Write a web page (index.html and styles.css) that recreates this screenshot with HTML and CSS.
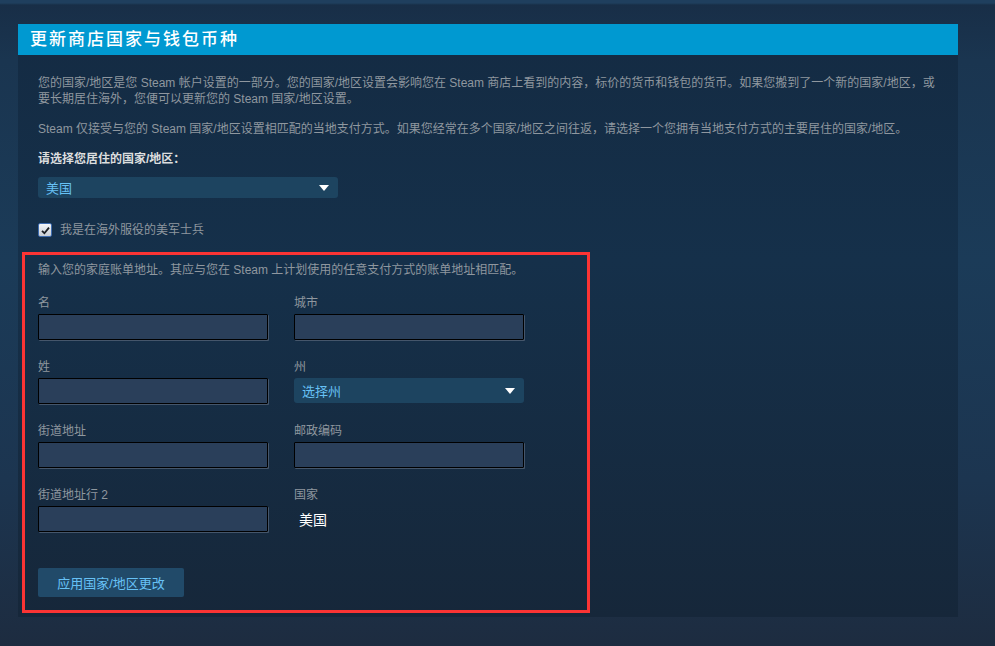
FILE: index.html
```html
<!DOCTYPE html>
<html>
<head>
  <meta charset="utf-8">
  <title>更新商店国家与钱包币种</title>
  <link rel="stylesheet" href="styles.css">
</head>
<body>
  <div class="page">
    <div class="panel">
      <div class="panel-title">更新商店国家与钱包币种</div>
      <div class="panel-body">
        <p class="note">您的国家/地区是您 Steam 帐户设置的一部分。您的国家/地区设置会影响您在 Steam 商店上看到的内容，标价的货币和钱包的货币。如果您搬到了一个新的国家/地区，或要长期居住海外，您便可以更新您的 Steam 国家/地区设置。</p>
        <p class="note">Steam 仅接受与您的 Steam 国家/地区设置相匹配的当地支付方式。如果您经常在多个国家/地区之间往返，请选择一个您拥有当地支付方式的主要居住的国家/地区。</p>
        <div class="country-label">请选择您居住的国家/地区：</div>
        <div class="dropdown country-select">
          <span>美国</span>
          <span class="arrow"></span>
        </div>
        <div class="check-row">
          <span class="checkbox">
            <svg width="9" height="9" viewBox="0 0 9 9"><path d="M1 4.8 L3.4 7.2 L8 1.6" fill="none" stroke="#1b1e22" stroke-width="1.8"/></svg>
          </span>
          我是在海外服役的美军士兵
        </div>

        <div class="billing">
          <p class="note">输入您的家庭账单地址。其应与您在 Steam 上计划使用的任意支付方式的账单地址相匹配。</p>
          <div class="billing-grid">
            <div class="field">
              <div class="field-label">名</div>
              <input class="text-input" type="text">
            </div>
            <div class="field">
              <div class="field-label">城市</div>
              <input class="text-input" type="text">
            </div>
            <div class="field">
              <div class="field-label">姓</div>
              <input class="text-input" type="text">
            </div>
            <div class="field">
              <div class="field-label">州</div>
              <div class="dropdown state-select">
                <span>选择州</span>
                <span class="arrow"></span>
              </div>
            </div>
            <div class="field">
              <div class="field-label">街道地址</div>
              <input class="text-input" type="text">
            </div>
            <div class="field">
              <div class="field-label">邮政编码</div>
              <input class="text-input" type="text">
            </div>
            <div class="field">
              <div class="field-label">街道地址行 2</div>
              <input class="text-input" type="text">
            </div>
            <div class="field">
              <div class="field-label">国家</div>
              <div class="country-value">美国</div>
            </div>
          </div>
          <button class="apply-btn" type="button">应用国家/地区更改</button>
        </div>
      </div>
    </div>
  </div>
</body>
</html>
```

FILE: styles.css
```css
html, body {
  margin: 0;
  height: 100%;
}
body {
  background: linear-gradient(180deg, #1f3f5e 0px, #1f3f5e 3px, #182e47 5px, #1a3550 60px, #1b3b58 260px, #1c3550 480px, #1d2c40 646px);
  font-family: "Liberation Sans", "Noto Sans CJK SC", sans-serif;
  font-size: 12px;
  overflow: hidden;
}
.page {
  padding: 24px 0 0 18px;
}
.panel {
  width: 940px;
  height: 593px;
  background: linear-gradient(180deg, #142b43 0%, #15304a 40%, #16273a 100%);
}
.panel-title {
  height: 31px;
  line-height: 31px;
  padding-left: 12px;
  background-color: #0099d1;
  color: #ffffff;
  font-size: 17px;
  font-weight: 500;
  letter-spacing: 2px;
}
.panel-body {
  padding: 20px 20px 0 20px;
}
.note {
  margin: 0 0 14px 0;
  line-height: 16px;
  color: #8f979f;
}
.country-label {
  line-height: 16px;
  color: #dcdedf;
  font-weight: bold;
  margin-bottom: 10px;
}
.dropdown {
  display: flex;
  align-items: center;
  justify-content: space-between;
  box-sizing: border-box;
  padding: 0 9px 0 8px;
  border-radius: 3px;
  background-color: #1d4460;
  color: #67c1f5;
  font-size: 13px;
}
.arrow {
  width: 0;
  height: 0;
  border-left: 5px solid transparent;
  border-right: 5px solid transparent;
  border-top: 6px solid #ffffff;
}
.country-select {
  width: 300px;
  height: 21px;
}
.state-select {
  width: 230px;
  height: 25px;
}
.check-row {
  display: flex;
  align-items: center;
  margin-top: 24px;
  line-height: 16px;
  color: #8f979f;
}
.checkbox {
  display: flex;
  align-items: center;
  justify-content: center;
  box-sizing: border-box;
  width: 14px;
  height: 14px;
  margin-right: 8px;
  border: 1px solid #3f6db0;
  border-radius: 2px;
  background: linear-gradient(180deg, #f4f6f8, #c9ced4);
}
.billing {
  width: 568px;
  box-sizing: border-box;
  margin: 14px 0 0 -16px;
  padding: 7px 13px 13px 13px;
  border: 3px solid #fb3434;
}
.billing .note {
  margin-bottom: 17px;
}
.billing-grid {
  display: grid;
  grid-template-columns: 230px 230px;
  column-gap: 26px;
  row-gap: 19px;
}
.field-label {
  line-height: 16px;
  color: #8f979f;
  margin-bottom: 3px;
}
.text-input {
  display: block;
  box-sizing: border-box;
  width: 230px;
  height: 26px;
  margin: 0;
  border: 1px solid #000000;
  border-radius: 1px;
  background-color: #2a3f5a;
  box-shadow: 1px 1px 0 #45566b;
  outline: none;
}
.country-value {
  padding: 3px 0 0 5px;
  color: #ffffff;
  font-size: 14px;
}
.apply-btn {
  display: block;
  margin-top: 36px;
  width: 146px;
  height: 29px;
  border: none;
  border-radius: 2px;
  background-color: #214a69;
  color: #67c1f5;
  font-family: "Liberation Sans", "Noto Sans CJK SC", sans-serif;
  font-size: 13px;
}
```
